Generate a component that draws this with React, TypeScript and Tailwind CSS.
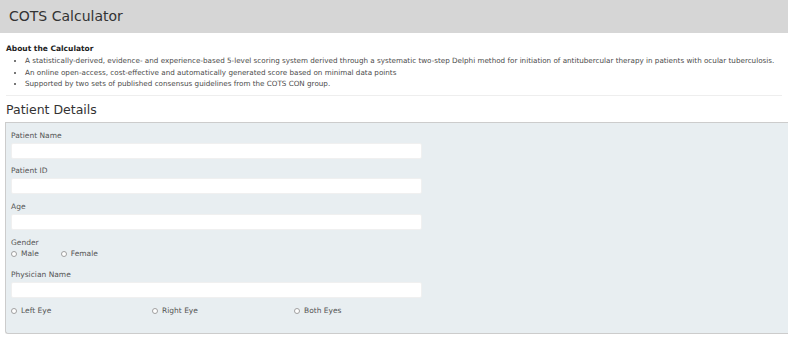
const bullets = [
  "A statistically-derived, evidence- and experience-based 5-level scoring system derived through a systematic two-step Delphi method for initiation of antitubercular therapy in patients with ocular tuberculosis.",
  "An online open-access, cost-effective and automatically generated score based on minimal data points",
  "Supported by two sets of published consensus guidelines from the COTS CON group.",
];

function Field({ label, className = "" }: { label: string; className?: string }) {
  return (
    <div className={"flex flex-col " + className}>
      <label className="text-[7.5px] leading-[10px] text-[#555]">{label}</label>
      <input
        type="text"
        className="mt-[2px] h-[16px] w-[411px] rounded-[2px] border border-[#f0f0f0] bg-white"
      />
    </div>
  );
}

function Radio({ label, name, className = "" }: { label: string; name: string; className?: string }) {
  return (
    <label className={"flex h-[10px] items-center gap-[4px] text-[7.5px] text-[#555] " + className}>
      <span className="h-[6px] w-[6px] rounded-full border border-[#a0a0a0] bg-white" />
      {label}
      <input type="radio" name={name} className="hidden" />
    </label>
  );
}

export default function App() {
  return (
    <div className="min-h-[337px] bg-white font-['DejaVu_Sans',sans-serif] text-[#444]">
      <div className="flex h-[33px] items-center bg-[#d6d6d6] px-[9px]">
        <h1 className="text-[14px] text-[#333]">COTS Calculator</h1>
      </div>

      <section className="mx-[6px] mt-[11px] border-b border-[#eeeeee] pb-[5px]">
        <h3 className="text-[7.5px] font-bold leading-[10px] text-[#222]">About the Calculator</h3>
        <ul className="mt-[1px] list-disc pl-[19px] text-[7.2px] leading-[11.5px] text-[#4a4a4a]">
          {bullets.map((b) => (
            <li key={b} className="whitespace-nowrap">{b}</li>
          ))}
        </ul>
      </section>

      <h2 className="mx-[6px] mt-[6px] text-[12.5px] leading-[16px] text-[#333]">Patient Details</h2>

      <div className="ml-[5px] mt-[4px] flex h-[212px] flex-col rounded-bl-[3px] border border-r-0 border-[#cccccc] bg-[#e8eef1] px-[5px] pt-[8px]">
        <Field label="Patient Name" />
        <Field label="Patient ID" className="mt-[7px]" />
        <Field label="Age" className="mt-[8px]" />
        <div className="mt-[8px] flex flex-col">
          <span className="text-[7.5px] leading-[10px] text-[#555]">Gender</span>
          <div className="mt-[1px] flex gap-[22px]">
            <Radio label="Male" name="gender" />
            <Radio label="Female" name="gender" />
          </div>
        </div>
        <Field label="Physician Name" className="mt-[11px]" />
        <div className="mt-[8px] flex">
          <Radio label="Left Eye" name="eye" className="w-[141px]" />
          <Radio label="Right Eye" name="eye" className="w-[142px]" />
          <Radio label="Both Eyes" name="eye" />
        </div>
      </div>
    </div>
  );
}
